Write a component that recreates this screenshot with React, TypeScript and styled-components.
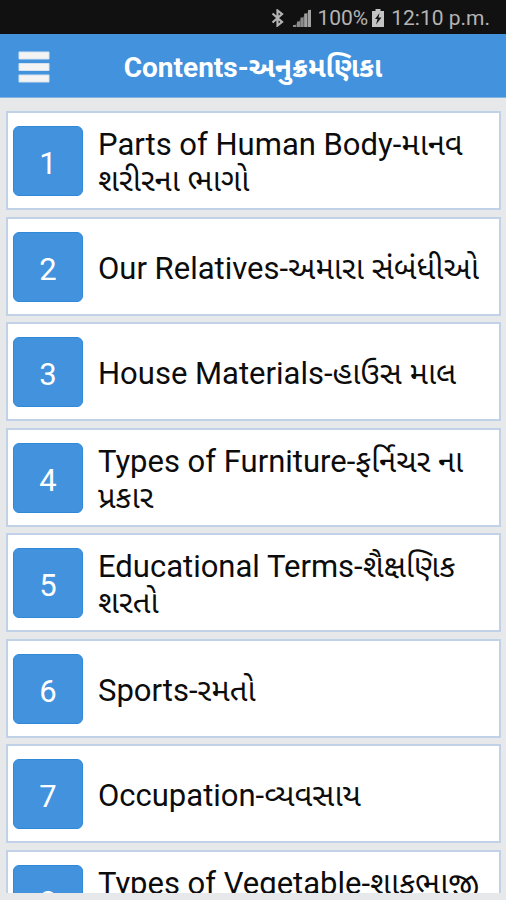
import React from 'react';
import styled, { createGlobalStyle } from 'styled-components';

const GlobalStyle = createGlobalStyle`
  * {
    box-sizing: border-box;
  }
  body {
    margin: 0;
    background: #e6e8e9;
    font-family: Roboto, "Noto Sans Gujarati", "Noto Sans", sans-serif;
  }
`;

const Screen = styled.div`
  display: flex;
  flex-direction: column;
  height: 100vh;
  padding-bottom: 7px;
`;

const StatusBar = styled.div`
  display: flex;
  flex: none;
  align-items: center;
  justify-content: flex-end;
  height: 34px;
  padding: 2px 16px 0 0;
  background: #111111;
  color: #b4b4b4;
  font-size: 21px;
  line-height: 24px;
`;

const StatusIcon = styled.svg<{ $gap: number }>`
  display: block;
  flex: none;
  margin-right: ${({ $gap }) => $gap}px;
`;

const StatusText = styled.span<{ $gap?: number }>`
  margin-right: ${({ $gap = 0 }) => $gap}px;
`;

const TitleBar = styled.header`
  display: grid;
  flex: none;
  grid-template-columns: 68px 1fr 68px;
  align-items: center;
  height: 64px;
  background: #4292de;
  border-bottom: 1px solid #86b5e4;
`;

const MenuButton = styled.button`
  display: flex;
  align-items: center;
  justify-content: center;
  height: 100%;
  padding: 2px 0 0;
  border: 0;
  background: none;
  cursor: pointer;
`;

const Title = styled.h1`
  margin: 0;
  padding-top: 4px;
  color: #ffffff;
  font-size: 28px;
  font-weight: 700;
  line-height: 36px;
  text-align: center;
  white-space: nowrap;
`;

const List = styled.ul`
  flex: 1;
  min-height: 0;
  margin: 13px 5px 0 6px;
  padding: 0;
  overflow-y: auto;
  list-style: none;
  scrollbar-width: none;
`;

const Item = styled.li`
  margin-bottom: 6px;

  &:nth-child(odd) {
    margin-bottom: 7px;
  }
`;

const Card = styled.a`
  display: flex;
  align-items: center;
  min-height: 99px;
  padding: 0 5px;
  border: 2px solid #c1d2e8;
  background: #ffffff;
  color: #0c0c0c;
  text-decoration: none;
`;

const Badge = styled.span`
  display: flex;
  flex: none;
  align-items: center;
  justify-content: center;
  width: 70px;
  height: 70px;
  margin-right: 15px;
  padding-top: 6px;
  border: 1px solid #2f89d9;
  border-radius: 6px;
  background: #4292de;
  color: #ffffff;
  font-size: 31px;
  line-height: 36px;
`;

const Label = styled.span<{ $twoLine: boolean }>`
  flex: 1;
  min-width: 0;
  min-height: ${({ $twoLine }) => ($twoLine ? '76px' : 'auto')};
  padding-top: 4px;
  font-size: 31px;
  line-height: 36px;
`;

const topics: { name: string; twoLine?: boolean }[] = [
  { name: 'Parts of Human Body-માનવ શરીરના ભાગો' },
  { name: 'Our Relatives-અમારા સંબંધીઓ' },
  { name: 'House Materials-હાઉસ માલ' },
  { name: 'Types of Furniture-ફર્નિચર ના પ્રકાર' },
  { name: 'Educational Terms-શૈક્ષણિક શરતો' },
  { name: 'Sports-રમતો' },
  { name: 'Occupation-વ્યવસાય' },
  { name: 'Types of Vegetable-શાકભાજી', twoLine: true },
];

function BluetoothIcon() {
  return (
    <StatusIcon $gap={9} width="13" height="18" viewBox="0 0 13 18" aria-hidden="true">
      <path d="M1.5 4.5 L11 13 L6.5 16.5 V1.5 L11 5 L1.5 13.5" fill="none" stroke="#b4b4b4" strokeWidth="2.2" />
    </StatusIcon>
  );
}

function SignalIcon() {
  return (
    <StatusIcon $gap={6} width="18" height="19" viewBox="0 0 18 19" aria-hidden="true">
      <path d="M0 18 L18 0 V18z" fill="#484848" />
      <path d="M0 16h3v2H0z M4 12.500h3V18H4z M7.500 8.500h3V18h-3z" fill="#8c8c8c" />
      <path d="M11.200 4.500h3V18h-3z M15 1h3v17h-3z" fill="#a2a2a2" />
    </StatusIcon>
  );
}

function BatteryIcon() {
  return (
    <StatusIcon $gap={7} width="12" height="18" viewBox="0 0 12 18" aria-hidden="true">
      <path d="M3.500 0h5v2H12v16H0V2h3.500z" fill="#c4c4c4" />
      <path d="M7.500 4 L3 10h2.500L4 15.500 L9.500 8.500H6.500z" fill="#151515" />
    </StatusIcon>
  );
}

function MenuIcon() {
  return (
    <svg width="32" height="32" viewBox="0 0 32 32" aria-hidden="true">
      <path d="M1 1h30v7H1z M1 12.500h30v7H1z M1 24h30v7H1z" fill="#f4f4f4" stroke="#d5e2ee" />
    </svg>
  );
}

export default function App() {
  return (
    <>
      <GlobalStyle />
      <Screen>
        <StatusBar>
          <BluetoothIcon />
          <SignalIcon />
          <StatusText $gap={4}>100%</StatusText>
          <BatteryIcon />
          <StatusText>12:10 p.m.</StatusText>
        </StatusBar>
        <TitleBar>
          <MenuButton type="button" aria-label="Menu">
            <MenuIcon />
          </MenuButton>
          <Title>Contents-અનુક્રમણિકા</Title>
        </TitleBar>
        <List>
          {topics.map(({ name, twoLine = false }, index) => (
            <Item key={name}>
              <Card href={`#topic-${index + 1}`}>
                <Badge>{index + 1}</Badge>
                <Label $twoLine={twoLine}>{name}</Label>
              </Card>
            </Item>
          ))}
        </List>
      </Screen>
    </>
  );
}
